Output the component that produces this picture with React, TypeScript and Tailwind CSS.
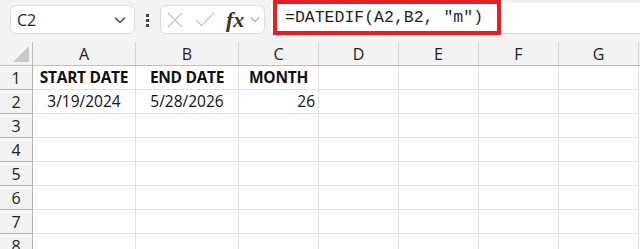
import React from 'react'

const cols = [
  { name: 'A', w: 'w-[103px]' },
  { name: 'B', w: 'w-[103px]' },
  { name: 'C', w: 'w-[80px]' },
  { name: 'D', w: 'w-[80px]' },
  { name: 'E', w: 'w-[80px]' },
  { name: 'F', w: 'w-[80px]' },
  { name: 'G', w: 'w-[80px]' },
]

const data: Record<number, { text: string; bold?: boolean; align?: string }[]> = {
  1: [
    { text: 'START DATE', bold: true, align: 'justify-center' },
    { text: 'END DATE', bold: true, align: 'justify-center' },
    { text: 'MONTH', bold: true, align: 'justify-center' },
  ],
  2: [
    { text: '3/19/2024', align: 'justify-center' },
    { text: '5/28/2026', align: 'justify-center' },
    { text: '26', align: 'justify-end' },
  ],
}

function Chevron({ className }: { className?: string }) {
  return (
    <svg viewBox="0 0 12 8" className={className} fill="none" stroke="currentColor" strokeWidth="1.3">
      <path d="M1 1.5 L6 6.5 L11 1.5" />
    </svg>
  )
}

function Toolbar() {
  return (
    <div className="h-[42px] bg-[#f3f3f3] flex items-start relative">
      <div className="mt-[5px] ml-[10px] w-[125px] h-[29px] bg-white border border-[#dcdcdc] rounded-[6px] flex items-center pl-[6px] pr-[8px] justify-between">
        <span className="text-[16px] text-[#1f1f1f]">C2</span>
        <Chevron className="w-[12px] h-[8px] text-[#444]" />
      </div>
      <div className="mt-[14px] ml-[11px] flex flex-col gap-[2px]">
        <div className="w-[3px] h-[3px] bg-[#444]" />
        <div className="w-[3px] h-[3px] bg-[#444]" />
        <div className="w-[3px] h-[3px] bg-[#444]" />
      </div>
      <div className="mt-[5px] ml-[11px] w-[105px] h-[29px] bg-white border border-[#dcdcdc] rounded-[6px] flex items-center pl-[6px]">
        <svg viewBox="0 0 16 16" className="w-[16px] h-[16px]" fill="none" stroke="#c4c4c4" strokeWidth="1.2">
          <path d="M1 1 L15 15 M15 1 L1 15" />
        </svg>
        <svg viewBox="0 0 20 15" className="ml-[12px] w-[20px] h-[15px]" fill="none" stroke="#c4c4c4" strokeWidth="1.2">
          <path d="M1 8 L6.5 13.5 L19 1" />
        </svg>
        <span className="ml-[11px] text-[22px] leading-none italic font-semibold text-[#333] font-['Liberation_Serif',serif]">fx</span>
        <Chevron className="ml-[6px] w-[10px] h-[7px] text-[#9a9a9a]" />
      </div>
      <div className="mt-[3px] ml-[6px] flex-1 h-[31px] bg-white border-b border-[#dcdcdc] flex items-center pl-[14px]">
        <span className="font-['Liberation_Mono',monospace] text-[16.5px] text-[#1f1f1f] whitespace-pre">=DATEDIF(A2,B2, "m")</span>
      </div>
      <div className="absolute left-[273px] top-0 w-[228px] h-[35px] border-[4px] border-[#e81c24]" />
    </div>
  )
}

function HeaderRow() {
  return (
    <div className="flex h-[24px] bg-[#f3f3f3] border-b border-[#bdbdbd]">
      <div className="w-[33px] border-r border-[#bdbdbd] relative">
        <svg viewBox="0 0 16 16" className="absolute right-[3px] bottom-[3px] w-[16px] h-[16px]">
          <path d="M16 0 L16 16 L0 16 Z" fill="#c8c8c8" />
        </svg>
      </div>
      {cols.map((c) => (
        <div key={c.name} className={`${c.w} border-r border-[#d4d4d4] flex items-center justify-center text-[16px] text-[#222]`}>
          {c.name}
        </div>
      ))}
    </div>
  )
}

function Row({ n }: { n: number }) {
  const cells = data[n] || []
  return (
    <div className="flex h-[24px]">
      <div className="w-[33px] bg-[#f3f3f3] border-r border-b border-[#b4b4b4] flex items-center justify-center text-[16px] text-[#222]">
        {n}
      </div>
      {cols.map((c, i) => {
        const cell = cells[i]
        return (
          <div
            key={c.name}
            className={`${c.w} border-r border-b border-[#e1e1e1] flex items-center px-[3px] text-[15.5px] text-[#111] ${cell?.align || ''} ${cell?.bold ? 'font-bold tracking-[-0.3px]' : ''}`}
          >
            {cell?.text}
          </div>
        )
      })}
    </div>
  )
}

export default function App() {
  return (
    <div className="w-[640px] h-[249px] overflow-hidden bg-white font-['Open_Sans',sans-serif]">
      <Toolbar />
      <HeaderRow />
      {[1, 2, 3, 4, 5, 6, 7, 8].map((n) => (
        <Row key={n} n={n} />
      ))}
    </div>
  )
}
